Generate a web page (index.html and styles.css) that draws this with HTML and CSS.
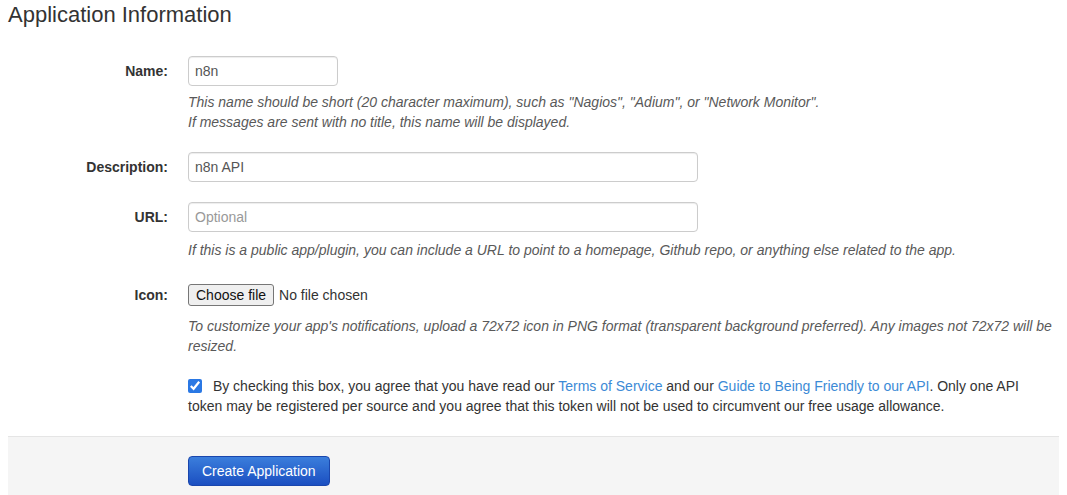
FILE: index.html
```html
<!DOCTYPE html>
<html lang="en">

<head>
  <meta charset="UTF-8">
  <title>Application Information</title>
  <link rel="stylesheet" href="styles.css">
</head>

<body>
  <h1 class="title">Application Information</h1>

  <form class="form-horizontal">
    <div class="control-group">
      <label class="control-label" for="name">Name:</label>
      <div class="controls">
        <input type="text" id="name" class="input-short" value="n8n">
        <p class="help-block">This name should be short (20 character maximum), such as "Nagios", "Adium", or "Network Monitor".<br>If messages are sent with no title, this name will be displayed.</p>
      </div>
    </div>

    <div class="control-group">
      <label class="control-label" for="description">Description:</label>
      <div class="controls">
        <input type="text" id="description" class="input-long" value="n8n API">
      </div>
    </div>

    <div class="control-group">
      <label class="control-label" for="url">URL:</label>
      <div class="controls">
        <input type="text" id="url" class="input-long" placeholder="Optional">
        <p class="help-block spaced">If this is a public app/plugin, you can include a URL to point to a homepage, Github repo, or anything else related to the app.</p>
      </div>
    </div>

    <div class="control-group">
      <label class="control-label">Icon:</label>
      <div class="controls">
        <div class="file-row">
          <button type="button" class="file-btn">Choose file</button>
          <span>No file chosen</span>
        </div>
        <p class="help-block">To customize your app's notifications, upload a 72x72 icon in PNG format (transparent background preferred). Any images not 72x72 will be resized.</p>
      </div>
    </div>

    <div class="control-group">
      <div class="controls offset">
        <label class="agree">
          <input type="checkbox" checked>
          By checking this box, you agree that you have read our <a href="#">Terms of Service</a> and our <a href="#">Guide to Being Friendly to our API</a>. Only one API token may be registered per source and you agree that this token will not be used to circumvent our free usage allowance.
        </label>
      </div>
    </div>

    <div class="form-actions">
      <button type="button" class="btn-primary">Create Application</button>
    </div>
  </form>
</body>

</html>
```

FILE: styles.css
```css
body {
  margin: 0;
  padding: 0 8px;
  font-family: "Liberation Sans", Arial, sans-serif;
  font-size: 14px;
  line-height: 20px;
  color: #333;
  background-color: #fff;
}

.title {
  margin: 0 0 26px;
  font-size: 22px;
  font-weight: normal;
  line-height: 30px;
  color: #333;
}

.control-group {
  display: grid;
  grid-template-columns: 160px 1fr;
  column-gap: 20px;
  margin-bottom: 20px;
}

.control-label {
  padding-top: 5px;
  text-align: right;
  font-weight: bold;
}

.controls.offset {
  grid-column: 2;
}

input[type="text"] {
  display: block;
  height: 30px;
  padding: 4px 6px;
  font-family: inherit;
  font-size: 14px;
  color: #555;
  border: 1px solid #ccc;
  border-radius: 4px;
  box-sizing: border-box;
  box-shadow: inset 0 1px 1px rgba(0, 0, 0, 0.075);
}

input::placeholder {
  color: #999;
}

.input-short {
  width: 150px;
}

.input-long {
  width: 510px;
}

.help-block {
  margin: 6px 0 0;
  font-style: italic;
  color: #595959;
}

.help-block.spaced {
  margin-top: 8px;
}

.file-row {
  display: flex;
  align-items: center;
  height: 30px;
  column-gap: 5px;
}

.file-btn {
  height: 22px;
  padding: 0 7px;
  font-family: inherit;
  font-size: 14px;
  color: #111;
  background-color: #efefef;
  border: 1px solid #767676;
  border-radius: 3px;
}

.agree {
  display: block;
  padding-right: 24px;
}

.agree input[type="checkbox"] {
  width: 14px;
  height: 14px;
  margin: 0 7px 0 0;
  vertical-align: -2px;
  accent-color: #2a78e4;
}

a {
  color: #3c8ad6;
  text-decoration: none;
}

.form-actions {
  margin-top: 20px;
  padding: 19px 20px 20px 180px;
  background-color: #f5f5f5;
  border-top: 1px solid #e5e5e5;
}

.btn-primary {
  height: 30px;
  padding: 0 13px;
  font-family: inherit;
  font-size: 14px;
  color: #fff;
  background-image: linear-gradient(to bottom, #3b7edc, #1b4fc1);
  border: 1px solid #1a46ad;
  border-radius: 4px;
  cursor: pointer;
}
```
